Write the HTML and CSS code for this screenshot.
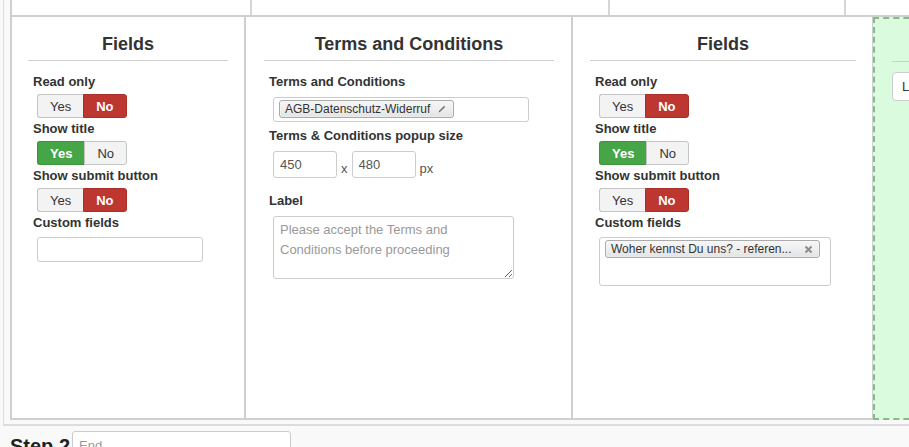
FILE: index.html
```html
<!DOCTYPE html>
<html lang="en">
<head>
    <meta charset="UTF-8">
    <meta name="viewport" content="width=device-width, initial-scale=1.0">
    <title>Form steps</title>
    <link rel="stylesheet" href="styles.css">
</head>
<body>
    <div class="page">
        <div class="board">
            <div class="top-row">
                <div class="top-cell cell-a"></div>
                <div class="top-cell cell-b"></div>
                <div class="top-cell cell-c"></div>
                <div class="top-cell cell-d"></div>
            </div>
            <div class="main-row">
                <!-- first fields block -->
                <div class="col col-1">
                    <h2>Fields</h2>
                    <div class="fields">
                        <label>Read only</label>
                        <div class="toggle">
                            <span class="opt">Yes</span><span class="opt no active">No</span>
                        </div>
                        <label>Show title</label>
                        <div class="toggle">
                            <span class="opt yes active">Yes</span><span class="opt">No</span>
                        </div>
                        <label>Show submit button</label>
                        <div class="toggle">
                            <span class="opt">Yes</span><span class="opt no active">No</span>
                        </div>
                        <label>Custom fields</label>
                        <div class="box custom-empty"></div>
                    </div>
                </div>

                <!-- terms block -->
                <div class="col col-2">
                    <h2>Terms and Conditions</h2>
                    <div class="fields">
                        <label>Terms and Conditions</label>
                        <div class="box chip-box terms-box">
                            <span class="chip">AGB-Datenschutz-Widerruf
                                <svg class="pencil" width="10" height="10" viewBox="0 0 10 10">
                                    <path d="M2 8 L2.4 6.4 L7 1.8 L8.2 3 L3.6 7.6 Z" fill="#7a7a7a"/>
                                    <path d="M1.6 8.4 L2.2 6.8 L3.2 7.8 Z" fill="#555"/>
                                </svg>
                            </span>
                        </div>
                        <label class="gap-s">Terms &amp; Conditions popup size</label>
                        <div class="size-row">
                            <input class="num" type="text" value="450">
                            <span class="unit">x</span>
                            <input class="num" type="text" value="480">
                            <span class="unit">px</span>
                        </div>
                        <label class="gap-l">Label</label>
                        <textarea class="note" placeholder="Please accept the Terms and Conditions before proceeding"></textarea>
                    </div>
                </div>

                <!-- second fields block -->
                <div class="col col-3">
                    <h2>Fields</h2>
                    <div class="fields">
                        <label>Read only</label>
                        <div class="toggle">
                            <span class="opt">Yes</span><span class="opt no active">No</span>
                        </div>
                        <label>Show title</label>
                        <div class="toggle">
                            <span class="opt yes active">Yes</span><span class="opt">No</span>
                        </div>
                        <label>Show submit button</label>
                        <div class="toggle">
                            <span class="opt">Yes</span><span class="opt no active">No</span>
                        </div>
                        <label>Custom fields</label>
                        <div class="box chip-box custom-box">
                            <span class="chip">Woher kennst Du uns? - referen...
                                <svg class="close" width="9" height="9" viewBox="0 0 9 9">
                                    <path d="M1.5 1.5 L7.5 7.5 M7.5 1.5 L1.5 7.5" stroke="#8c8c8c" stroke-width="2"/>
                                </svg>
                            </span>
                        </div>
                    </div>
                </div>

                <!-- drop zone -->
                <div class="col col-drop">
                    <h2>&nbsp;</h2>
                    <div class="drop-item">Label</div>
                </div>
            </div>
        </div>
    </div>
    <div class="step">
        <h3>Step 2</h3>
        <input class="step-name" type="text" placeholder="End">
    </div>
</body>
</html>
```

FILE: styles.css
```css
body {
    font-family: "Liberation Sans", Arial, sans-serif;
    font-size: 13px;
    color: #333;
    margin: 0;
    background-color: #f9f9f9;
    overflow: hidden;
    height: 447px;
}
.page {
    margin-left: 3px;
    padding-left: 6px;
    padding-bottom: 4px;
    border-left: 1px solid #dcdcdc;
    border-bottom: 2px solid #dcdcdc;
    width: 1200px;
}
.board {
    border-left: 2px solid #cfcfcf;
}
.top-row {
    display: flex;
    height: 17px;
    border-bottom: 2px solid #cfcfcf;
    box-sizing: border-box;
    background-color: #fff;
}
.top-cell {
    border-right: 2px solid #d6d6d6;
    box-sizing: border-box;
}
.cell-a { width: 240px; }
.cell-b { width: 358px; }
.cell-c { width: 236px; }
.cell-d { flex: 1; border-right: none; }

.main-row {
    display: flex;
    height: 403px;
}
.col {
    box-sizing: border-box;
    background-color: #fff;
    padding: 0 17px;
    border-bottom: 2px solid #cfcfcf;
}
.col-1 { width: 234px; border-right: 2px solid #cfcfcf; padding: 0 16px; }
.col-2 { width: 327px; border-right: 2px solid #cfcfcf; padding: 0 17px 0 18px; }
.col-3 { width: 300px; border-right: 1px solid #cfcfcf; padding: 0 16px 0 17px; }
.col-drop {
    width: 300px;
    background-color: #dafbdd;
    border: 2px dashed #84bb89;
}
.col-drop h2 {
    margin-top: 16px;
}

h2 {
    margin: 17px 0 0;
    font-size: 18px;
    line-height: 20px;
    padding-bottom: 6px;
    border-bottom: 1px solid #d0d0d0;
    text-align: center;
    color: #333;
}
.fields {
    display: flex;
    flex-direction: column;
    align-items: flex-start;
    margin-top: 12px;
    padding-left: 5px;
}
label {
    font-weight: bold;
    line-height: 18px;
}
.gap-s { margin-top: 5px; }
.gap-l { margin-top: 14px; }

.toggle {
    display: flex;
    margin: 3px 0 2px 4px;
    height: 24px;
}
.opt {
    display: flex;
    align-items: center;
    padding: 0 12px;
    background-color: #f3f3f3;
    border: 1px solid #c4c4c4;
    color: #333;
}
.opt:first-child {
    border-radius: 3px 0 0 3px;
    border-right: none;
}
.opt:last-child {
    border-radius: 0 3px 3px 0;
    padding: 0 12px;
}
.opt.active {
    color: #fff;
    font-weight: bold;
}
.opt.no {
    background-color: #bd362f;
    border-color: #a8302a;
}
.opt.yes {
    background-color: #46a546;
    border-color: #3c933c;
}

.box {
    box-sizing: border-box;
    margin-left: 4px;
    background-color: #fff;
    border: 1px solid #cccccc;
    border-radius: 3px;
}
.custom-empty {
    width: 166px;
    height: 25px;
    margin-top: 5px;
}
.chip-box {
    padding: 2px 5px;
    margin-top: 5px;
}
.terms-box {
    width: 256px;
    height: 25px;
    margin-top: 6px;
}
.custom-box {
    width: 232px;
    height: 49px;
}
.chip {
    display: inline-flex;
    align-items: center;
    gap: 5px;
    height: 18px;
    box-sizing: border-box;
    padding: 0 6px 0 5px;
    font-size: 12px;
    color: #333;
    border: 1px solid #aaa;
    border-radius: 3px;
    background: linear-gradient(#f6f6f6, #eeeeee 50%, #e3e3e3);
    box-shadow: inset 0 0 2px #fff;
}
.pencil { margin-left: 2px; }
.close { margin-left: 7px; }

.size-row {
    display: flex;
    align-items: flex-end;
    margin: 6px 0 0 4px;
}
.num {
    box-sizing: border-box;
    width: 64px;
    height: 27px;
    padding: 0 6px;
    font-family: "Liberation Sans", Arial, sans-serif;
    font-size: 13px;
    color: #555;
    border: 1px solid #cccccc;
    border-radius: 3px;
}
.unit {
    padding: 0 4px 2px 4px;
    color: #555;
}
.note {
    box-sizing: border-box;
    width: 241px;
    height: 63px;
    margin: 6px 0 0 4px;
    padding: 3px 6px;
    font-family: "Liberation Sans", Arial, sans-serif;
    font-size: 13px;
    line-height: 20px;
    border: 1px solid #cccccc;
    border-radius: 3px;
}
.note::placeholder {
    color: #999;
}
.drop-item {
    display: inline-block;
    margin-top: 10px;
    padding: 0 9px;
    height: 27px;
    line-height: 27px;
    background-color: #fff;
    border: 1px solid #ccc;
    border-radius: 4px;
    color: #333;
}

.step {
    display: flex;
    gap: 2px;
    padding: 5px 0 0 10px;
}
.step h3 {
    margin: 0;
    font-size: 20px;
    line-height: 30px;
    color: #222;
}
.step-name {
    box-sizing: border-box;
    width: 219px;
    height: 28px;
    padding: 0 6px;
    font-family: "Liberation Sans", Arial, sans-serif;
    font-size: 13px;
    border: 1px solid #ccc;
    border-radius: 3px;
}
.step-name::placeholder {
    color: #999;
}
```
